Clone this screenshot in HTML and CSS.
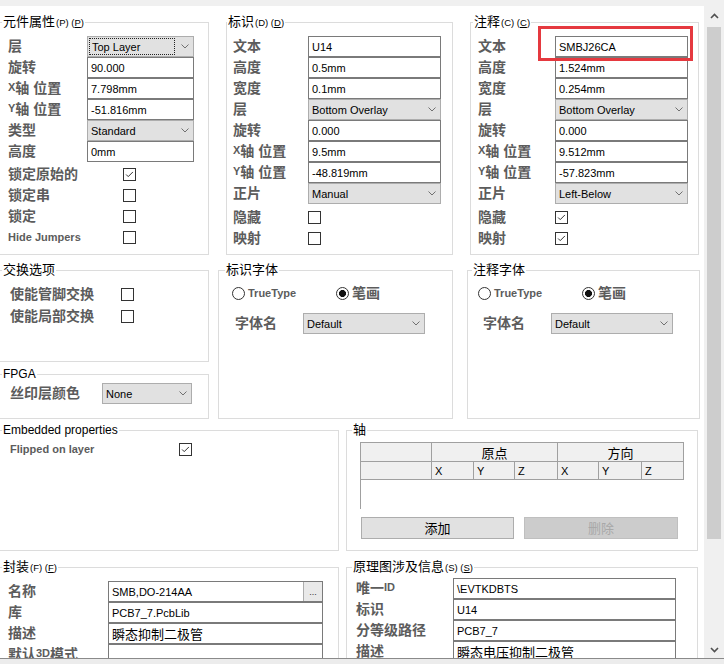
FILE: index.html
```html
<!DOCTYPE html>
<html lang="zh-CN">
<head>
<meta charset="utf-8">
<title>元件属性</title>
<link rel="stylesheet" href="styles.css">
</head>
<body>
<div class="window">
  <div class="main">
    <div class="content">
      <div class="topstrip"></div>

      <!-- Row 1 -->
      <div class="row row1">
        <fieldset class="group w-r1a edge">
          <legend>元件属性<span class="acc">(P) (<u>P</u>)</span></legend>
          <div class="body b-r1a">
            <div class="fields f-a">
              <span class="lbl">层</span>
              <div class="combo"><span class="focus-ring">Top Layer</span><svg class="chev" viewBox="0 0 8 5"><path d="M0.5 0.5 L4 4 L7.5 0.5"/></svg></div>
              <span class="lbl">旋转</span><div class="inp">90.000</div>
              <span class="lbl"><span class="lat">X</span>轴 位置</span><div class="inp">7.798mm</div>
              <span class="lbl"><span class="lat">Y</span>轴 位置</span><div class="inp">-51.816mm</div>
              <span class="lbl">类型</span>
              <div class="combo"><span class="val">Standard</span><svg class="chev" viewBox="0 0 8 5"><path d="M0.5 0.5 L4 4 L7.5 0.5"/></svg></div>
              <span class="lbl">高度</span><div class="inp">0mm</div>
            </div>
            <div class="checks c-a">
              <span class="lbl">锁定原始的</span><span class="cb on"><svg viewBox="0 0 13 13"><path d="M2.5 6.5 L5 9 L10.5 3.5"/></svg></span>
              <span class="lbl">锁定串</span><span class="cb"></span>
              <span class="lbl">锁定</span><span class="cb"></span>
              <span class="lbl en">Hide Jumpers</span><span class="cb"></span>
            </div>
          </div>
        </fieldset>

        <fieldset class="group w-r1b">
          <legend class="lg0">标识<span class="acc">(D) (<u>D</u>)</span></legend>
          <div class="body b-r1b">
            <div class="fields f-b">
              <span class="lbl">文本</span><div class="inp">U14</div>
              <span class="lbl">高度</span><div class="inp">0.5mm</div>
              <span class="lbl">宽度</span><div class="inp">0.1mm</div>
              <span class="lbl">层</span>
              <div class="combo"><span class="val">Bottom Overlay</span><svg class="chev" viewBox="0 0 8 5"><path d="M0.5 0.5 L4 4 L7.5 0.5"/></svg></div>
              <span class="lbl">旋转</span><div class="inp">0.000</div>
              <span class="lbl"><span class="lat">X</span>轴 位置</span><div class="inp">9.5mm</div>
              <span class="lbl"><span class="lat">Y</span>轴 位置</span><div class="inp">-48.819mm</div>
              <span class="lbl">正片</span>
              <div class="combo"><span class="val">Manual</span><svg class="chev" viewBox="0 0 8 5"><path d="M0.5 0.5 L4 4 L7.5 0.5"/></svg></div>
            </div>
            <div class="checks c-b">
              <span class="lbl">隐藏</span><span class="cb"></span>
              <span class="lbl">映射</span><span class="cb"></span>
            </div>
          </div>
        </fieldset>

        <fieldset class="group w-r1c">
          <legend class="lg2">注释<span class="acc">(C) (<u>C</u>)</span></legend>
          <div class="body b-r1c">
            <div class="fields f-c">
              <span class="lbl">文本</span>
              <div class="inp marked">SMBJ26CA<span class="highlight"></span></div>
              <span class="lbl">高度</span><div class="inp">1.524mm</div>
              <span class="lbl">宽度</span><div class="inp">0.254mm</div>
              <span class="lbl">层</span>
              <div class="combo"><span class="val">Bottom Overlay</span><svg class="chev" viewBox="0 0 8 5"><path d="M0.5 0.5 L4 4 L7.5 0.5"/></svg></div>
              <span class="lbl">旋转</span><div class="inp">0.000</div>
              <span class="lbl"><span class="lat">X</span>轴 位置</span><div class="inp">9.512mm</div>
              <span class="lbl"><span class="lat">Y</span>轴 位置</span><div class="inp">-57.823mm</div>
              <span class="lbl">正片</span>
              <div class="combo"><span class="val">Left-Below</span><svg class="chev" viewBox="0 0 8 5"><path d="M0.5 0.5 L4 4 L7.5 0.5"/></svg></div>
            </div>
            <div class="checks c-c">
              <span class="lbl">隐藏</span><span class="cb on"><svg viewBox="0 0 13 13"><path d="M2.5 6.5 L5 9 L10.5 3.5"/></svg></span>
              <span class="lbl">映射</span><span class="cb on"><svg viewBox="0 0 13 13"><path d="M2.5 6.5 L5 9 L10.5 3.5"/></svg></span>
            </div>
          </div>
        </fieldset>
      </div>

      <!-- Row 2 -->
      <div class="row row2">
        <div class="col edge">
          <fieldset class="group w-r2a h-swap">
            <legend>交换选项</legend>
            <div class="body b-swap">
              <div class="checks c-swap">
                <span class="lbl">使能管脚交换</span><span class="cb"></span>
                <span class="lbl">使能局部交换</span><span class="cb"></span>
              </div>
            </div>
          </fieldset>
          <fieldset class="group w-r2a h-fpga">
            <legend class="en-title">FPGA</legend>
            <div class="body b-fpga">
              <div class="fields f-fpga">
                <span class="lbl">丝印层颜色</span>
                <div class="combo"><span class="val">None</span><svg class="chev" viewBox="0 0 8 5"><path d="M0.5 0.5 L4 4 L7.5 0.5"/></svg></div>
              </div>
            </div>
          </fieldset>
        </div>

        <fieldset class="group w-r2b h-font">
          <legend class="lg6">标识字体</legend>
          <div class="body b-fontb">
            <div class="radios">
              <span class="opt"><span class="radio"></span><span class="opt-en">TrueType</span></span>
              <span class="opt"><span class="radio on"></span><span class="opt-cjk">笔画</span></span>
            </div>
            <div class="fontrow fr-b">
              <span class="lbl">字体名</span>
              <div class="combo"><span class="val">Default</span><svg class="chev" viewBox="0 0 8 5"><path d="M0.5 0.5 L4 4 L7.5 0.5"/></svg></div>
            </div>
          </div>
        </fieldset>

        <fieldset class="group w-r2c h-font">
          <legend>注释字体</legend>
          <div class="body b-fontc">
            <div class="radios">
              <span class="opt"><span class="radio"></span><span class="opt-en">TrueType</span></span>
              <span class="opt"><span class="radio on"></span><span class="opt-cjk">笔画</span></span>
            </div>
            <div class="fontrow fr-c">
              <span class="lbl">字体名</span>
              <div class="combo"><span class="val">Default</span><svg class="chev" viewBox="0 0 8 5"><path d="M0.5 0.5 L4 4 L7.5 0.5"/></svg></div>
            </div>
          </div>
        </fieldset>
      </div>

      <!-- Row 3 -->
      <div class="row row3">
        <fieldset class="group w-r3a h-r3 edge">
          <legend class="en-title">Embedded properties</legend>
          <div class="body b-emb">
            <div class="checks c-emb">
              <span class="lbl en">Flipped on layer</span><span class="cb on"><svg viewBox="0 0 13 13"><path d="M2.5 6.5 L5 9 L10.5 3.5"/></svg></span>
            </div>
          </div>
        </fieldset>

        <fieldset class="group w-r3b h-r3">
          <legend class="lg5">轴</legend>
          <div class="body b-axis">
            <div class="axis-head">
              <div class="ah"></div>
              <div class="ah span3 center">原点</div>
              <div class="ah span3 center">方向</div>
              <div class="ah"></div>
              <div class="ah sub">X</div><div class="ah sub">Y</div><div class="ah sub">Z</div>
              <div class="ah sub">X</div><div class="ah sub">Y</div><div class="ah sub">Z</div>
            </div>
            <div class="axis-body"></div>
            <div class="btns">
              <button class="btn" type="button">添加</button>
              <button class="btn" type="button" disabled>删除</button>
            </div>
          </div>
        </fieldset>
      </div>

      <!-- Row 4 -->
      <div class="row row4">
        <fieldset class="group w-r3a h-r4 edge">
          <legend>封装<span class="acc">(F) (<u>F</u>)</span></legend>
          <div class="body b-fp">
            <div class="fields f-fp">
              <span class="lbl">名称</span>
              <div class="inp with-btn"><span class="val">SMB,DO-214AA</span><span class="dots">...</span></div>
              <span class="lbl">库</span><div class="inp">PCB7_7.PcbLib</div>
              <span class="lbl">描述</span><div class="inp"><span class="cjk">瞬态抑制二极管</span></div>
              <span class="lbl">默认<span class="lat">3D</span>模式</span><div class="inp"></div>
            </div>
          </div>
        </fieldset>

        <fieldset class="group w-r3b h-r4">
          <legend class="lg5">原理图涉及信息<span class="acc">(S) (<u>S</u>)</span></legend>
          <div class="body b-sch">
            <div class="fields f-sch">
              <span class="lbl">唯一<span class="lat">ID</span></span><div class="inp">\EVTKDBTS</div>
              <span class="lbl">标识</span><div class="inp">U14</div>
              <span class="lbl">分等级路径</span><div class="inp">PCB7_7</div>
              <span class="lbl">描述</span><div class="inp"><span class="cjk">瞬态电压抑制二极管</span></div>
            </div>
          </div>
        </fieldset>
      </div>
    </div>

    <div class="scrollbar">
      <div class="sb-btn"><svg class="sb-arrow" viewBox="0 0 9 6"><path d="M1 5 L4.5 1.5 L8 5"/></svg></div>
      <div class="sb-thumb"></div>
      <div class="sb-btn sb-down"><svg class="sb-arrow" viewBox="0 0 9 6"><path d="M1 1 L4.5 4.5 L8 1"/></svg></div>
    </div>
  </div>
  <div class="bottombar"></div>
</div>
</body>
</html>
```

FILE: styles.css
```css
* { box-sizing: border-box; }
html, body { margin: 0; padding: 0; }
body {
  width: 724px;
  height: 664px;
  overflow: hidden;
  background: #fff;
  color: #000;
  font-family: "Liberation Sans", "Noto Sans CJK SC", sans-serif;
  font-size: 11px;
}

.window { display: flex; flex-direction: column; height: 664px; }
.main { display: flex; height: 658px; flex: none; }
.content {
  width: 704px;
  flex: none;
  overflow: hidden;
  display: flex;
  flex-direction: column;
}
.topstrip { height: 6px; background: #f0f0f0; flex: none; }
.bottombar { height: 6px; flex: none; border-top: 1px solid #8a8a8a; background: #ececec; }

/* rows */
.row { display: flex; align-items: flex-start; flex: none; }
.row1 { margin-top: 8px; }
.row2 { margin-top: 7px; }
.row3 { margin-top: 3px; }
.row4 { margin-top: 8px; }
.col { display: flex; flex-direction: column; flex: none; }

/* group boxes */
fieldset.group {
  margin: 0;
  padding: 0;
  border: 1px solid #dcdcdc;
  min-width: 0;
  flex: none;
  height: 241px;
}
.col.edge, fieldset.group.edge { margin-left: -3px; }
legend {
  padding: 0 1px;
  margin-left: 4px;
  font-size: 13px;
  line-height: 16px;
  color: #000;
  white-space: nowrap;
}
legend.lg0 { margin-left: 0; }
legend.lg2 { margin-left: 2px; }
legend.lg5 { margin-left: 5px; }
legend.lg6 { margin-left: 6px; }
legend.en-title { font-size: 12px; }
.acc { font-size: 9.5px; margin-left: 1px; }
.acc u { text-decoration: underline; text-underline-offset: 1px; }

fieldset.w-r1a { width: 212px; }
fieldset.w-r1b { width: 227px; margin-left: 17px; }
fieldset.w-r1c { width: 229px; margin-left: 17px; }
fieldset.w-r2a { width: 212px; }
fieldset.h-swap { height: 100px; }
fieldset.h-fpga { height: 53px; margin-top: 4px; }
fieldset.w-r2b { width: 235px; margin-left: 9px; }
fieldset.w-r2c { width: 233px; margin-left: 14px; }
fieldset.h-font { height: 157px; }
fieldset.w-r3a { width: 342px; }
fieldset.w-r3b { width: 352px; margin-left: 7px; }
fieldset.h-r3 { height: 129px; }
fieldset.h-r4 { height: 140px; }

.b-r1a { padding: 5px 0 0 10px; }
.b-r1b { padding: 5px 0 0 6px; }
.b-r1c { padding: 5px 0 0 7px; }
.b-swap { padding: 5px 0 0 12px; }
.b-fpga { padding: 1px 0 0 12px; }
.b-fontb { padding: 4px 0 0 13px; }
.b-fontc { padding: 4px 0 0 10px; }
.b-emb { padding: 1px 0 0 12px; }
.b-axis { padding: 4px 0 0 13px; }
.b-fp { padding: 5px 0 0 10px; }
.b-sch { padding: 2px 0 0 9px; }

/* form grids */
.fields, .checks { display: grid; grid-auto-rows: 21px; }
.f-a { grid-template-columns: 79px 107px; }
.f-b { grid-template-columns: 75px 133px; }
.f-c { grid-template-columns: 77px 133px; }
.f-fpga { grid-template-columns: 92px 90px; }
.f-fp { grid-template-columns: 100px 215px; }
.f-sch { grid-template-columns: 97px 223px; }

.c-a { grid-template-columns: 115px 13px; margin-top: 2px; }
.c-b { grid-template-columns: 75px 13px; margin-top: 3px; }
.c-c { grid-template-columns: 77px 13px; margin-top: 3px; }
.c-swap { grid-template-columns: 111px 13px; grid-auto-rows: 22px; }
.c-emb { grid-template-columns: 169px 13px; }

.lbl {
  display: flex;
  align-items: center;
  white-space: nowrap;
  font-size: 14px;
  font-weight: 700;
  color: #5c5c5c;
  padding-bottom: 3px;
}
.lbl.en, .lat { font-size: 11px; font-weight: 700; }
.lbl.en { padding-bottom: 1px; }

.inp {
  height: 21px;
  border: 1px solid #7a7a7a;
  background: #fff;
  padding-left: 3px;
  display: flex;
  align-items: center;
  white-space: nowrap;
  overflow: hidden;
}
.inp.marked { position: relative; overflow: visible; }
.highlight {
  position: absolute;
  left: -18px;
  top: -11px;
  width: 155px;
  height: 35px;
  border: 3px solid #e5393f;
  pointer-events: none;
}
.inp.with-btn { padding-right: 0; }
.inp.with-btn .val { flex: 1; }
.dots {
  width: 19px;
  height: 100%;
  border-left: 1px solid #adadad;
  background: #e9e9e9;
  display: flex;
  align-items: center;
  justify-content: center;
  font-size: 9px;
  color: #333;
}
.cjk { font-size: 13px; }

.combo {
  height: 21px;
  border: 1px solid #adadad;
  background: #e1e1e1;
  padding: 0 4px 0 3px;
  display: flex;
  align-items: center;
  justify-content: space-between;
  white-space: nowrap;
}
.focus-ring {
  flex: 1;
  height: 17px;
  margin: 0 6px 0 -2px;
  padding-left: 2px;
  border: 1px dotted #222;
  display: flex;
  align-items: center;
}
.chev { width: 8px; height: 5px; flex: none; }
.chev path { fill: none; stroke: #707070; stroke-width: 1; }

/* checkbox */
.cb {
  align-self: center;
  width: 13px;
  height: 13px;
  border: 1px solid #333;
  background: #fff;
  display: flex;
}
.cb svg { width: 11px; height: 11px; }
.cb svg path { fill: none; stroke: #222; stroke-width: 1.1; }

/* radios */
.radios { display: flex; height: 22px; align-items: center; }
.opt { display: flex; align-items: center; gap: 3px; width: 104px; flex: none; }
.radio {
  width: 13px;
  height: 13px;
  border: 1px solid #333;
  border-radius: 50%;
  background: #fff;
  flex: none;
}
.radio.on { background: radial-gradient(circle, #111 0 3.2px, #fff 3.8px); }
.opt-en { font-size: 11px; font-weight: 700; color: #5c5c5c; }
.opt-cjk { font-size: 14px; font-weight: 700; color: #5c5c5c; padding-bottom: 2px; }

.fontrow { display: grid; grid-template-rows: 21px; margin-top: 9px; }
.fr-b { grid-template-columns: 68px 122px; margin-left: 3px; }
.fr-c { grid-template-columns: 68px 122px; margin-left: 5px; }

/* axis table */
.axis-head {
  display: grid;
  width: 324px;
  grid-template-columns: 71px 42px 41px 43px 41px 43px 42px;
  grid-template-rows: 19px 18px;
  border-top: 1px solid #a0a0a0;
  border-left: 1px solid #a0a0a0;
  background: #f0f0f0;
}
.ah {
  border-right: 1px solid #a0a0a0;
  border-bottom: 1px solid #a0a0a0;
  display: flex;
  align-items: center;
  font-size: 11px;
}
.ah.span3 { grid-column: span 3; }
.ah.center { justify-content: center; font-size: 13px; }
.ah.sub { padding-left: 3px; }
.axis-body { width: 324px; height: 29px; border-left: 1px solid #a0a0a0; }
.btns { display: flex; gap: 10px; margin: 8px 0 0 1px; }
.btn {
  width: 153px;
  height: 22px;
  border: 1px solid #adadad;
  background: #e1e1e1;
  font-family: "Noto Sans CJK SC", sans-serif;
  font-size: 13px;
  color: #000;
  padding: 0;
  line-height: 18px;
}
.btn:disabled { width: 154px; background: #cccccc; border-color: #bfbfbf; color: #a8a8a8; }

/* scrollbar */
.scrollbar {
  width: 20px;
  flex: none;
  background: #f0f0f0;
  display: flex;
  flex-direction: column;
  padding-top: 6px;
}
.sb-btn { height: 19px; display: flex; align-items: center; justify-content: center; flex: none; }
.sb-down { margin-top: auto; height: 17px; }
.sb-arrow { width: 9px; height: 6px; }
.sb-arrow path { fill: none; stroke: #505050; stroke-width: 1.6; }
.sb-thumb { height: 512px; margin: 2px 3px 0; background: #cdcdcd; flex: none; }
```
